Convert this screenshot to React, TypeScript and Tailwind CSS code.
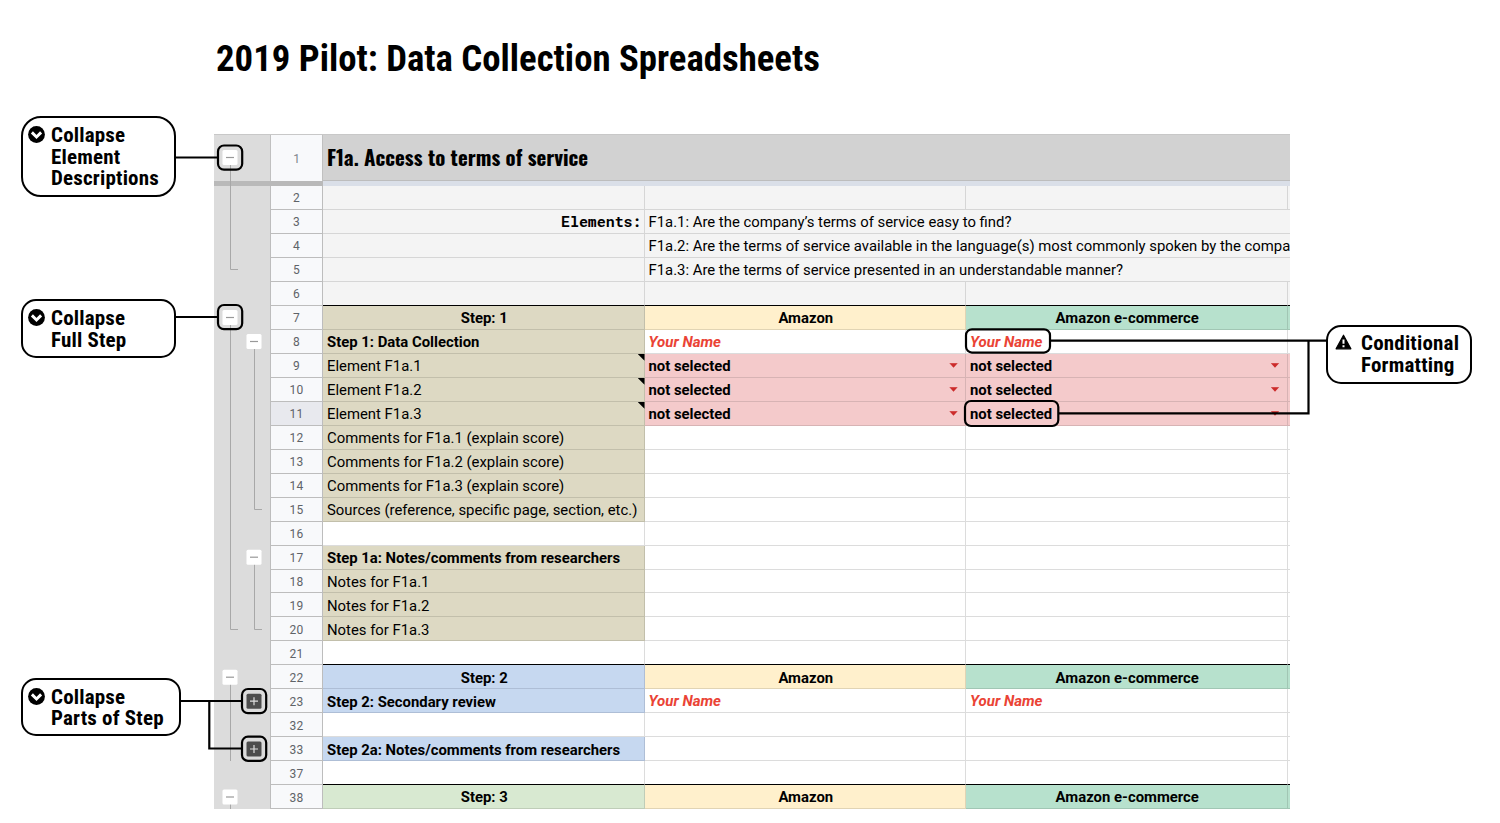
import type { ReactNode } from "react";

type Tone = "plain" | "gray" | "khaki" | "cream" | "mint" | "pink" | "blue" | "green";
type Cell = { text?: string; tone?: Tone; style?: string; note?: boolean; menu?: boolean; open?: boolean };
type Row = { n: number; cells: [Cell, Cell, Cell]; thick?: boolean; active?: boolean };

const TONES: Record<Tone, string> = {
  plain: "bg-white border-[#dcdcdc]",
  gray: "bg-[#f4f4f4] border-[#d6d6d6]",
  khaki: "bg-[#ddd9c3] border-[#c2bfab]",
  cream: "bg-[#fff0cc] border-[#e1d4b4]",
  mint: "bg-[#b7e1cd] border-[#a1c6b4]",
  pink: "bg-[#f4cacb] border-[#d7b3b4]",
  blue: "bg-[#c6d8f0] border-[#aebed6]",
  green: "bg-[#d8e9d1] border-[#bfcdb8]",
};

const bold = "font-bold";
const mid = "font-bold justify-center";
const name: Cell = { text: "Your Name", style: "font-bold italic text-[15px] text-[#ea4335]" };
const pick: Cell = { text: "not selected", tone: "pink", style: bold, menu: true };
const none: Cell = {};
const gray: Cell = { tone: "gray" };
const spill: Cell = { tone: "gray", open: true };

const header = (n: number, step: string, tone: Tone): Row => ({
  n,
  cells: [
    { text: step, tone, style: mid },
    { text: "Amazon", tone: "cream", style: mid },
    { text: "Amazon e-commerce", tone: "mint", style: mid },
  ],
});
const blank = (n: number, thick = false): Row => ({ n, thick, cells: [none, none, none] });
const line = (n: number, text: string, tone: Tone, style = ""): Row => ({
  n,
  cells: [{ text, tone, style }, none, none],
});
const element = (n: number, text: string, active = false): Row => ({
  n,
  active,
  cells: [{ text, tone: "khaki", note: true }, pick, pick],
});

const ROWS: Row[] = [
  { n: 2, cells: [gray, gray, gray] },
  {
    n: 3,
    cells: [
      {
        text: "Elements:",
        tone: "gray",
        style:
          "justify-end pb-[2px] font-bold font-['Roboto_Mono','DejaVu_Sans_Mono',monospace] text-[14.9px]",
      },
      { ...spill, text: "F1a.1: Are the company’s terms of service easy to find?" },
      spill,
    ],
  },
  {
    n: 4,
    cells: [
      gray,
      {
        ...spill,
        text: "F1a.2: Are the terms of service available in the language(s) most commonly spoken by the compa",
      },
      spill,
    ],
  },
  {
    n: 5,
    cells: [gray, { ...spill, text: "F1a.3: Are the terms of service presented in an understandable manner?" }, spill],
  },
  { n: 6, thick: true, cells: [gray, gray, gray] },
  header(7, "Step: 1", "khaki"),
  { n: 8, cells: [{ text: "Step 1: Data Collection", tone: "khaki", style: bold }, name, name] },
  element(9, "Element F1a.1"),
  element(10, "Element F1a.2"),
  element(11, "Element F1a.3", true),
  line(12, "Comments for F1a.1 (explain score)", "khaki"),
  line(13, "Comments for F1a.2 (explain score)", "khaki"),
  line(14, "Comments for F1a.3 (explain score)", "khaki"),
  line(15, "Sources (reference, specific page, section, etc.)", "khaki"),
  blank(16),
  line(17, "Step 1a: Notes/comments from researchers", "khaki", bold),
  line(18, "Notes for F1a.1", "khaki"),
  line(19, "Notes for F1a.2", "khaki"),
  line(20, "Notes for F1a.3", "khaki"),
  blank(21, true),
  header(22, "Step: 2", "blue"),
  { n: 23, cells: [{ text: "Step 2: Secondary review", tone: "blue", style: bold }, name, name] },
  blank(32),
  line(33, "Step 2a: Notes/comments from researchers", "blue", bold),
  blank(37, true),
  header(38, "Step: 3", "green"),
];

function SheetCell({ cell, thick }: { cell: Cell; thick?: boolean }) {
  const tone = TONES[cell.tone ?? "plain"];
  return (
    <div
      className={`relative flex w-[321.5px] shrink-0 items-center whitespace-nowrap border-b pl-1 pr-[2px] pt-[1.8px] ${tone} ${
        cell.open ? "" : "border-r"
      } ${thick ? "border-b-black" : ""} ${cell.style ?? ""}`}
    >
      {cell.text && <span className={cell.open ? "relative z-10" : ""}>{cell.text}</span>}
      {cell.note && (
        <span className="absolute -right-px top-0 h-[7px] w-[7px] bg-black [clip-path:polygon(0_0,100%_0,100%_100%)]" />
      )}
      {cell.menu && (
        <span className="ml-auto mr-[5px] h-[5px] w-[9px] -translate-y-[0.8px] bg-[#cc2b2b] [clip-path:polygon(0_0,100%_0,50%_100%)]" />
      )}
    </div>
  );
}

function SheetRow({ row }: { row: Row }) {
  const [a, b, c] = row.cells;
  const edge = TONES[c.tone ?? "plain"];
  return (
    <div className="flex h-[23.975px]">
      <div
        className={`flex w-[53px] shrink-0 items-center justify-center border-x border-b border-[#bdbdbd] pt-[1.8px] text-[12px] tracking-[0.3px] text-[#5f6368] ${
          row.active ? "bg-[#e8e9ee]" : "bg-[#f8f9fb]"
        }`}
      >
        {row.n}
      </div>
      <SheetCell cell={a} thick={row.thick} />
      <SheetCell cell={b} thick={row.thick} />
      <SheetCell cell={c} thick={row.thick} />
      <div className={`flex-1 border-b ${edge} ${row.thick ? "border-b-black" : ""}`} />
    </div>
  );
}

function Chevron() {
  return (
    <svg viewBox="0 0 17 17" className="mt-px h-[17px] w-[17px] shrink-0">
      <circle cx="8.5" cy="8.5" r="8.4" />
      <path d="M3.9 6.4 8.5 11l4.6-4.6" fill="none" stroke="#fff" strokeWidth="2.9" />
    </svg>
  );
}

function Warning() {
  return (
    <svg viewBox="0 0 17 16" className="mt-px h-[16px] w-[17px] shrink-0">
      <path d="M8.5 1.2 15.9 14.8H1.1Z" strokeWidth="1.2" stroke="#000" strokeLinejoin="round" />
      <path d="M8.5 5.6v4.2M8.5 11.3v2" stroke="#fff" strokeWidth="2" />
    </svg>
  );
}

function Callout({ className, icon, lines }: { className: string; icon: ReactNode; lines: string[] }) {
  return (
    <div
      className={`flex border-[2px] border-black bg-white font-['Roboto_Condensed','Roboto',sans-serif] text-[21px] font-bold leading-[21.5px] tracking-[0.18px] [font-stretch:75%] ${className}`}
    >
      {icon}
      <div className="whitespace-nowrap">
        {lines.map((l) => (
          <div key={l}>{l}</div>
        ))}
      </div>
    </div>
  );
}

function Toggle({ x, y, closed }: { x: number; y: number; closed?: boolean }) {
  return (
    <g>
      <rect x={x - 7.5} y={y - 7.5} width="15" height="15" rx="1.5" fill={closed ? "#4d4d4d" : "#fff"} />
      <path
        d={closed ? `M${x - 4} ${y}h8M${x} ${y - 4}v8` : `M${x - 4} ${y}h8`}
        stroke={closed ? "#ddd" : "#999"}
        strokeWidth="1.2"
      />
    </g>
  );
}

function Outline() {
  return (
    <svg viewBox="214 134 56 675" className="h-[675px] w-[56px] shrink-0 bg-[#dcdcdc]">
      <rect x="214" y="134" width="56" height="1" fill="#c8c8c8" />
      <rect x="214" y="181" width="56" height="5" fill="#b9b9b9" />
      <g fill="none" stroke="#a8a8a8">
        <path d="M230.5 157V269.5H238" />
        <path d="M230.5 317V629.5H238" />
        <path d="M254.5 341V509.5H262" />
        <path d="M254.5 557V629.5H262" />
        <path d="M230.5 677V761" />
        <path d="M230.5 797V810" />
      </g>
      <Toggle x={230} y={157.5} />
      <Toggle x={230} y={317.5} />
      <Toggle x={254} y={341.5} />
      <Toggle x={254} y={557.2} />
      <Toggle x={230} y={677.2} />
      <Toggle x={254} y={701.2} closed />
      <Toggle x={254} y={749} closed />
      <Toggle x={230} y={797} />
    </svg>
  );
}

function Connectors() {
  return (
    <svg viewBox="0 0 1500 823" className="pointer-events-none absolute inset-0 z-20 h-[823px] w-[1500px]">
      <g fill="none" stroke="#000" strokeWidth="2.2">
        <path d="M175 157.5H218" />
        <path d="M175 317H218" />
        <path d="M180 701H242M209.3 701V748.5H242" />
        <path d="M1050 340.7H1327M1308.5 340.7V413.3H1058" />
        <rect x="218" y="145.5" width="24.2" height="24.2" rx="6" />
        <rect x="218" y="305" width="24.2" height="24.2" rx="6" />
        <rect x="242" y="689" width="24.2" height="24.2" rx="6" />
        <rect x="242" y="736.7" width="24.2" height="24.2" rx="6" />
        <rect x="966" y="329.3" width="84" height="23.3" rx="6" />
        <rect x="965" y="401" width="93.3" height="25" rx="6" />
      </g>
    </svg>
  );
}

export default function App() {
  return (
    <div className="relative h-[823px] w-[1500px] overflow-hidden bg-white font-['Roboto',sans-serif] text-[14.87px] text-black">
      <h1 className="flex h-[134px] items-start pl-[216px] pt-[37px] font-['Roboto_Condensed','Roboto',sans-serif] text-[36.75px] font-bold leading-[44px] [font-stretch:75%]">
        <span className="whitespace-nowrap">2019 Pilot: Data Collection Spreadsheets</span>
      </h1>
      <div className="flex h-[675px]">
        <div className="-mt-[18px] flex w-[214px] shrink-0 flex-col items-start pl-[21px]">
          <Callout
            className="h-[80.5px] w-[155px] gap-[6px] rounded-[20px] pl-[5px] pt-[7px]"
            icon={<Chevron />}
            lines={["Collapse", "Element", "Descriptions"]}
          />
          <Callout
            className="mt-[102.5px] h-[58.5px] w-[155px] gap-[6px] rounded-[15px] pl-[5px] pt-[7.4px]"
            icon={<Chevron />}
            lines={["Collapse", "Full Step"]}
          />
          <Callout
            className="mt-[320px] h-[58.5px] w-[160px] gap-[6px] rounded-[15px] pl-[5px] pt-[7.4px]"
            icon={<Chevron />}
            lines={["Collapse", "Parts of Step"]}
          />
        </div>
        <Outline />
        <div className="w-[1020px] shrink-0 overflow-hidden">
          <div className="flex h-[47px] border-t border-[#c8c8c8]">
            <div className="flex w-[53px] items-center justify-center border-x border-[#c0c0c0] bg-[#f8f9fb] pt-px text-[12px] text-[#80868b]">
              1
            </div>
            <div className="flex flex-1 items-center border-b border-[#bdbdbd] bg-[#d2d2d2] pb-[1.5px] pl-1 font-['Oswald','Roboto_Condensed','Roboto',sans-serif] text-[20.85px] font-bold [font-stretch:75%]">
              <span className="whitespace-nowrap">F1a. Access to terms of service</span>
            </div>
          </div>
          <div className="flex h-[5px]">
            <div className="w-[53px] bg-[#b9b9b9]" />
            <div className="flex-1 bg-[#dadfe8]" />
          </div>
          {ROWS.map((row) => (
            <SheetRow key={row.n} row={row} />
          ))}
        </div>
        <div className="flex flex-1 items-start pl-[36px] pt-[191px]">
          <Callout
            className="h-[58.5px] w-[146px] gap-[9px] rounded-[15px] pl-[7px] pt-[6px]"
            icon={<Warning />}
            lines={["Conditional", "Formatting"]}
          />
        </div>
      </div>
      <Connectors />
    </div>
  );
}
